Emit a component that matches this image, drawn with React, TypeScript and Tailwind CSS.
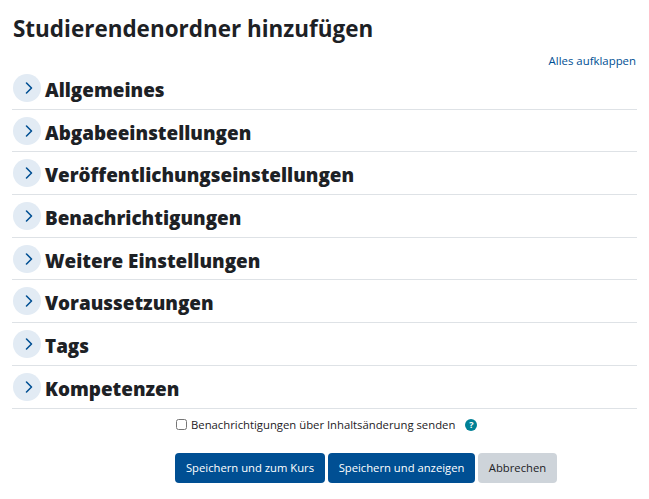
import { ChevronRight } from 'lucide-react';

const sections = [
    'Allgemeines',
    'Abgabeeinstellungen',
    'Veröffentlichungseinstellungen',
    'Benachrichtigungen',
    'Weitere Einstellungen',
    'Voraussetzungen',
    'Tags',
    'Kompetenzen',
];

const App = () => {
    return (
        <div className="w-[649px] h-[499px] overflow-hidden bg-white px-3 font-['Open_Sans',sans-serif] text-[#1d2125]">
            <h2 className="pt-[12px] pl-[1px] text-[22.46px] leading-[33px] font-bold">Studierendenordner hinzufügen</h2>

            <div className="mt-[8px] mr-[1px] flex justify-end text-[11.4px] leading-[16px]">
                <a className="text-[#004f93]">Alles aufklappen</a>
            </div>

            <div className="-mt-[2px]">
                {sections.map((section) => (
                    <div key={section} className="flex h-[42.7px] items-start border-b border-[#dee2e6] pt-[7px]">
                        <span className="ml-[1px] flex h-7 w-7 items-center justify-center rounded-full bg-[#e2ebf4]">
                            <ChevronRight size={20} strokeWidth={1.9} className="ml-[3px] text-[#004f93]" />
                        </span>
                        <span className="ml-[4px] pt-[2px] text-[18.85px] leading-[28px] font-extrabold">{section}</span>
                    </div>
                ))}
            </div>

            <div className="mt-[8px] flex items-center gap-[10px] pl-[164px] text-[11.3px] leading-[16px]">
                <label className="flex items-center gap-[4px]">
                    <input type="checkbox" className="h-[11px] w-[11px]" />
                    Benachrichtigungen über Inhaltsänderung senden
                </label>
                <span className="flex h-3 w-3 items-center justify-center rounded-full bg-[#008196] text-[9px] leading-none font-bold text-white">?</span>
            </div>

            <div className="mt-[20px] flex gap-[3px] pl-[163px] text-[11.25px]">
                <button className="h-[30px] w-[150px] rounded-[4px] bg-[#004f93] pt-[1px] text-white">Speichern und zum Kurs</button>
                <button className="h-[30px] w-[147px] rounded-[4px] bg-[#004f93] pt-[1px] text-white">Speichern und anzeigen</button>
                <button className="h-[30px] w-[79px] rounded-[4px] bg-[#ced4da] pt-[1px]">Abbrechen</button>
            </div>
        </div>
    );
};

export default App;
